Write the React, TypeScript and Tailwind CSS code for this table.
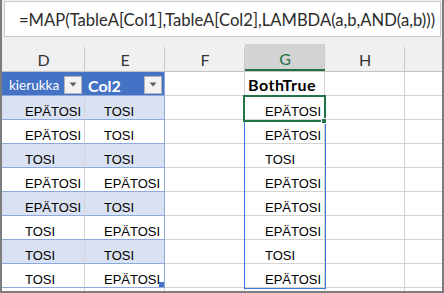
const rows: [string, string, string][] = [
  ['EPÄTOSI', 'TOSI', 'EPÄTOSI'],
  ['EPÄTOSI', 'TOSI', 'EPÄTOSI'],
  ['TOSI', 'TOSI', 'TOSI'],
  ['EPÄTOSI', 'EPÄTOSI', 'EPÄTOSI'],
  ['EPÄTOSI', 'TOSI', 'EPÄTOSI'],
  ['TOSI', 'EPÄTOSI', 'EPÄTOSI'],
  ['TOSI', 'TOSI', 'TOSI'],
  ['TOSI', 'EPÄTOSI', 'EPÄTOSI'],
];

const cols = [
  { label: 'D', w: 'w-[83px]' },
  { label: 'E', w: 'w-[80px]' },
  { label: 'F', w: 'w-[80px]' },
  { label: 'G', w: 'w-[80px]' },
  { label: 'H', w: 'w-[80px]' },
];

function Dropdown() {
  return (
    <div className="w-[18px] h-[18px] bg-[#f3f3f3] border border-[#b4b4b4] flex items-center justify-center shrink-0">
      <svg width="8" height="5" viewBox="0 0 8 5">
        <path d="M0.5 0.5 L7.5 0.5 L4 4.5 Z" fill="#5f5f5f" />
      </svg>
    </div>
  );
}

export default function App() {
  return (
    <div className="w-[444px] h-[293px] overflow-hidden bg-white border-l-2 border-r-2 border-b-2 border-[#7d7d7d] font-['Lato',sans-serif]">
      {/* Formula bar */}
      <div className="h-[44px] bg-[#f0f0f0] pt-[1px] pl-[2px]">
        <div className="w-[437px] h-[36px] bg-white border border-[#c8c8c8] flex items-center pl-[14px] pt-[3px] text-[16.6px] text-[#2b2b2b]">
          =MAP(TableA[Col1],TableA[Col2],LAMBDA(a,b,AND(a,b)))
        </div>
      </div>

      {/* Column headers */}
      <div className="flex h-[28px] bg-[#f0f0f0] border-b border-[#c2c2c2]">
        {cols.map((c) => (
          <div
            key={c.label}
            className={`${c.w} flex items-center justify-center pt-[5px] text-[16px] relative ${
              c.label === 'G' ? 'bg-[#d3d3d3] text-[#217346] border-b-2 border-[#217346]' : 'text-[#333333]'
            }`}
          >
            {c.label}
            <div className="absolute right-0 top-[3px] bottom-0 w-px bg-[#c8c8c8]" />
          </div>
        ))}
        <div className="flex-1" />
      </div>

      {/* Sheet body */}
      <div className="relative font-['Liberation_Sans',Arial,sans-serif] text-[13px] text-black">
        {/* Table header row */}
        <div className="flex h-[24px]">
          <div className="w-[83px] bg-[#4472c4] border-b border-[#8ea9db] flex items-center justify-between pl-[7px] pr-[3px] pt-[2px]">
            <span className="font-['Lato',sans-serif] text-[13.5px] text-white pt-[2px] whitespace-nowrap">kierukka</span>
            <Dropdown />
          </div>
          <div className="w-[80px] bg-[#4472c4] border-r border-b border-[#8ea9db] flex items-center justify-between pr-[2px] pt-[2px]">
            <span className="font-['Lato',sans-serif] font-bold text-[16px] text-white pl-[3px] pt-[2px]">Col2</span>
            <Dropdown />
          </div>
          <div className="w-[80px] border-r border-b border-[#d4d4d4]" />
          <div className="w-[80px] border-r border-b border-[#d4d4d4] flex items-end pl-[3px]">
            <span className="font-['Lato',sans-serif] font-bold text-[16px] tracking-[0.5px] leading-[20px]">BothTrue</span>
          </div>
          <div className="w-[80px] border-r border-b border-[#d4d4d4]" />
          <div className="flex-1 border-b border-[#d4d4d4]" />
        </div>

        {/* Data rows */}
        {rows.map(([d, e, g], i) => {
          const band = i % 2 === 0 ? 'bg-[#d9e1f2]' : 'bg-white';
          return (
            <div key={i} className="flex h-[24px]">
              <div className={`w-[83px] ${band} border-r border-r-[#d4d4d4] border-b border-b-[#8ea9db] flex items-end pl-[23px] leading-[14px]`}>
                {d}
              </div>
              <div className={`w-[80px] ${band} border-r border-b border-[#8ea9db] flex items-end pl-[19px] leading-[14px]`}>
                {e}
              </div>
              <div className="w-[80px] border-r border-b border-[#d4d4d4]" />
              <div className="w-[80px] border-r border-b border-[#d4d4d4] flex items-end pl-[20px] leading-[14px]">
                {g}
              </div>
              <div className="w-[80px] border-r border-b border-[#d4d4d4]" />
              <div className="flex-1 border-b border-[#d4d4d4]" />
            </div>
          );
        })}
        <div className="flex h-[24px]">
          <div className="w-[83px] border-r border-[#d4d4d4]" />
          <div className="w-[80px] border-r border-[#d4d4d4]" />
          <div className="w-[80px] border-r border-[#d4d4d4]" />
          <div className="w-[80px] border-r border-[#d4d4d4]" />
          <div className="w-[80px] border-r border-[#d4d4d4]" />
        </div>

        {/* Selection range */}
        <div className="absolute left-[242px] top-[23px] w-[82px] h-[194px] border border-[#3c78d8] pointer-events-none" />
        {/* Active cell */}
        <div className="absolute left-[241px] top-[23px] w-[83px] h-[27px] border-2 border-[#217346] pointer-events-none" />
        <div className="absolute left-[319px] top-[46px] w-[6px] h-[6px] bg-[#217346] border border-white" />
        {/* Table resize handle */}
        <div className="absolute left-[157px] top-[210px] w-[5px] h-[5px] bg-[#4472c4]" />
      </div>
    </div>
  );
}
